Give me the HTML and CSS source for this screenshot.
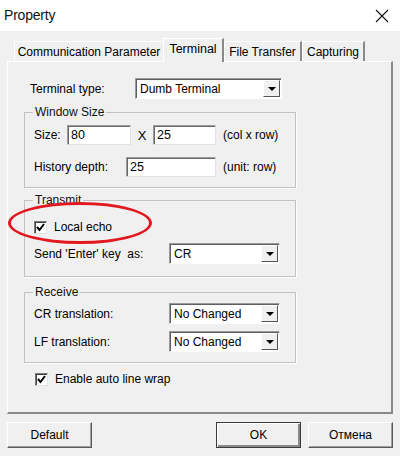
FILE: index.html
```html
<!DOCTYPE html>
<html lang="en">
<head>
    <meta charset="UTF-8">
    <title>Property</title>
    <link rel="stylesheet" href="styles.css">
</head>
<body>

<div class="window">
    <div class="titlebar">
        <span class="title">Property</span>
        <svg class="close" width="14" height="14" viewBox="0 0 14 14">
            <path d="M1 1 L13 13 M13 1 L1 13" stroke="#111" stroke-width="1.1" fill="none"/>
        </svg>
    </div>

    <div class="dialog">
        <div class="tabs">
            <div class="tab tab-comm">Communication Parameter</div>
            <div class="tab tab-term active">Terminal</div>
            <div class="tab tab-file">File Transfer</div>
            <div class="tab tab-cap">Capturing</div>
        </div>

        <div class="panel">
            <div class="row type-row">
                <label class="lbl-type">Terminal type:</label>
                <div class="combo combo-type">
                    <span class="combo-text">Dumb Terminal</span>
                    <span class="combo-btn"><span class="arrow"></span></span>
                </div>
            </div>

            <fieldset class="group group-window">
                <legend>Window Size</legend>
                <div class="row">
                    <label class="lbl-size">Size:</label>
                    <div class="edit edit-col">80</div>
                    <span class="times">X</span>
                    <div class="edit edit-row">25</div>
                    <span class="unit">(col x row)</span>
                </div>
                <div class="row row-history">
                    <label class="lbl-history">History depth:</label>
                    <div class="edit edit-history">25</div>
                    <span class="unit">(unit: row)</span>
                </div>
            </fieldset>

            <fieldset class="group group-transmit">
                <legend>Transmit</legend>
                <div class="row check-row">
                    <span class="check">
                        <svg width="11" height="11" viewBox="0 0 11 11"><path d="M2 5 L4.5 8 L9 2" stroke="#000" stroke-width="2" fill="none"/></svg>
                    </span>
                    <span>Local echo</span>
                </div>
                <div class="row row-send">
                    <label class="lbl-wide">Send 'Enter' key &nbsp;as:</label>
                    <div class="combo combo-small">
                        <span class="combo-text">CR</span>
                        <span class="combo-btn"><span class="arrow"></span></span>
                    </div>
                </div>
            </fieldset>

            <fieldset class="group group-receive">
                <legend>Receive</legend>
                <div class="row">
                    <label class="lbl-wide">CR translation:</label>
                    <div class="combo combo-small">
                        <span class="combo-text">No Changed</span>
                        <span class="combo-btn"><span class="arrow"></span></span>
                    </div>
                </div>
                <div class="row row-lf">
                    <label class="lbl-wide">LF translation:</label>
                    <div class="combo combo-small">
                        <span class="combo-text">No Changed</span>
                        <span class="combo-btn"><span class="arrow"></span></span>
                    </div>
                </div>
            </fieldset>

            <div class="row check-row wrap-row">
                <span class="check">
                    <svg width="11" height="11" viewBox="0 0 11 11"><path d="M2 5 L4.5 8 L9 2" stroke="#000" stroke-width="2" fill="none"/></svg>
                </span>
                <span>Enable auto line wrap</span>
            </div>
        </div>

        <div class="buttons">
            <button class="btn">Default</button>
            <span class="spacer"></span>
            <button class="btn btn-default">OK</button>
            <button class="btn">Отмена</button>
        </div>
    </div>

    <div class="highlight"></div>
</div>

</body>
</html>
```

FILE: styles.css
```css
body {
    margin: 0;
    font-family: "Liberation Sans", Arial, sans-serif;
    font-size: 12px;
    color: #000;
    background-color: #f0f0f0;
}

.window {
    position: relative;
    width: 400px;
    height: 456px;
    background-color: #f0f0f0;
    overflow: hidden;
}

.titlebar {
    height: 31px;
    background-color: #fff;
    display: flex;
    align-items: center;
    justify-content: space-between;
    padding: 0 11px 0 4px;
}

.title {
    font-size: 14px;
    letter-spacing: -0.2px;
    color: #111;
    margin-top: -1px;
}

.dialog {
    padding: 6px 7px 0 7px;
}

/* tabs */
.tabs {
    display: flex;
    align-items: flex-end;
    height: 24px;
    padding-left: 7px;
}

.tab {
    height: 20px;
    line-height: 20px;
    text-align: center;
    border-top: 1px solid #fff;
    border-left: 1px solid #fff;
    border-right: 2px solid #8a8a8a;
    box-sizing: border-box;
    background-color: #f0f0f0;
}

.tab-comm { width: 149px; border-right: none; }
.tab-term { width: 61px; }
.tab-file { width: 78px; }
.tab-cap { width: 63px; }

.tab.active {
    height: 24px;
    line-height: 21px;
    font-size: 12.5px;
    margin-bottom: -1px;
    position: relative;
    z-index: 1;
}

.panel {
    height: 353px;
    box-sizing: border-box;
    border-top: 1px solid #fff;
    border-left: 1px solid #fff;
    border-right: 2px solid #8a8a8a;
    border-bottom: 2px solid #8a8a8a;
    padding: 16px 0 0 16px;
}

.row {
    display: flex;
    align-items: center;
}

/* terminal type */
.type-row {
    height: 21px;
    padding-left: 6px;
}

.lbl-type {
    width: 105px;
}

.combo {
    height: 21px;
    box-sizing: border-box;
    display: flex;
    background-color: #fff;
    border-top: 1px solid #9a9a9a;
    border-left: 1px solid #9a9a9a;
    border-right: 1px solid #fff;
    border-bottom: 1px solid #fff;
    box-shadow: inset 1px 1px 0 #5f5f5f;
}

.combo-type {
    width: 147px;
}

.combo-small {
    width: 111px;
}

.combo-text {
    flex: 1;
    padding: 2px 0 0 4px;
    line-height: 16px;
}

.combo-btn {
    width: 17px;
    margin: 1px 1px 1px 0;
    box-sizing: border-box;
    background-color: #f0f0f0;
    border-top: 1px solid #fff;
    border-left: 1px solid #fff;
    border-right: 1px solid #555;
    border-bottom: 1px solid #555;
    display: flex;
    align-items: center;
    justify-content: center;
}

.arrow {
    width: 0;
    height: 0;
    border-left: 4px solid transparent;
    border-right: 4px solid transparent;
    border-top: 4px solid #000;
}

/* group boxes */
.group {
    width: 272px;
    box-sizing: border-box;
    margin: 0;
    border: 1px solid #c2c2c2;
    box-shadow: 1px 1px 0 #fff;
    padding: 0 0 0 9px;
}

.group legend {
    padding: 0 2px;
    margin-left: -1px;
    line-height: 14px;
    color: #111;
}

.group-window {
    margin-top: 6px;
    padding-top: 6px;
    padding-bottom: 10px;
}

.group-transmit {
    margin-top: 5px;
    padding-top: 12px;
    padding-bottom: 12px;
}

.group-receive {
    margin-top: 8px;
    padding-top: 4px;
    padding-bottom: 10px;
}

.edit {
    height: 20px;
    box-sizing: border-box;
    background-color: #fff;
    border-top: 1px solid #9a9a9a;
    border-left: 1px solid #9a9a9a;
    border-right: 1px solid #e3e3e3;
    border-bottom: 1px solid #e3e3e3;
    box-shadow: inset 1px 1px 0 #6a6a6a;
    padding: 1px 0 0 3px;
    line-height: 17px;
    font-size: 12.5px;
}

.lbl-size { width: 33px; }
.edit-col { width: 64px; }
.times { width: 22px; text-align: center; font-size: 13px; }
.edit-row { width: 63px; }
.unit { margin-left: 7px; }

.row-history { margin-top: 12px; }
.lbl-history { width: 92px; }
.edit-history { width: 90px; }

.check-row {
    height: 16px;
}

.check {
    width: 13px;
    height: 13px;
    box-sizing: border-box;
    background-color: #fff;
    border-top: 1px solid #7a7a7a;
    border-left: 1px solid #7a7a7a;
    border-right: 1px solid #e3e3e3;
    border-bottom: 1px solid #e3e3e3;
    box-shadow: inset 1px 1px 0 #404040;
    display: flex;
    align-items: center;
    justify-content: center;
    margin-right: 7px;
}

.row-send { margin-top: 8px; }
.row-lf { margin-top: 7px; }

.lbl-wide { width: 135px; }

.wrap-row {
    margin-top: 8px;
    padding-left: 11px;
}

/* bottom buttons */
.buttons {
    display: flex;
    margin-top: 8px;
}

.spacer { flex: 1; }

.btn {
    width: 85px;
    height: 26px;
    font-family: "Liberation Sans", Arial, sans-serif;
    font-size: 12px;
    color: #000;
    background-color: #f0f0f0;
    border-top: 1px solid #fff;
    border-left: 1px solid #fff;
    border-right: 1px solid #5a5a5a;
    border-bottom: 1px solid #5a5a5a;
    box-shadow: inset -1px -1px 0 #a0a0a0;
    padding: 0;
    margin-left: 7px;
}

.btn:first-child { margin-left: 0; }

.btn-default {
    border: 1px solid #3a3a3a;
    box-shadow: inset 1px 1px 0 #fff, inset -2px -2px 0 #8a8a8a;
}

/* red annotation circle */
.highlight {
    position: absolute;
    left: 8px;
    top: 202px;
    width: 144px;
    height: 42px;
    box-sizing: border-box;
    border: 3px solid #e3171e;
    border-radius: 50%;
}
```
